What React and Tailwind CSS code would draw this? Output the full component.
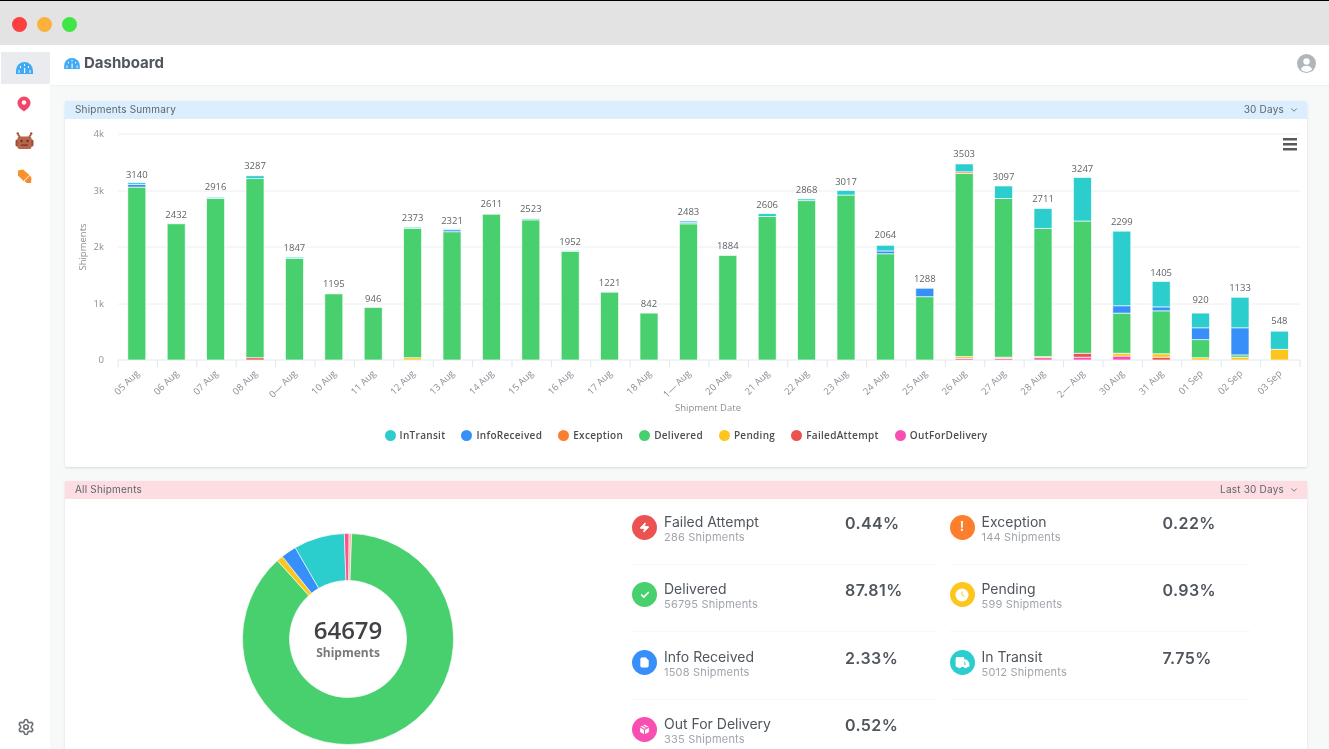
import { ChevronDown, Settings, Zap, Check, File, Package, Truck } from 'lucide-react'

const COLORS = {
    ofd: '#f94fb0',
    failed: '#ec5252',
    pending: '#fdc61f',
    delivered: '#48d06e',
    exception: '#fb7f2c',
    info: '#3790f9',
    transit: '#2ccdcd',
}

// segments go bottom to top, same order as the stack in the chart
const DAYS = [
    ['05 Aug', 3140, [['delivered', 3060], ['info', 50], ['transit', 30]]],
    ['06 Aug', 2432, [['delivered', 2410]]],
    ['07 Aug', 2916, [['delivered', 2860], ['transit', 20]]],
    ['08 Aug', 3287, [['failed', 40], ['delivered', 3170], ['transit', 50]]],
    ['0— Aug', 1847, [['delivered', 1800], ['transit', 20]]],
    ['10 Aug', 1195, [['delivered', 1170]]],
    ['11 Aug', 946, [['delivered', 930]]],
    ['12 Aug', 2373, [['pending', 40], ['delivered', 2290], ['transit', 20]]],
    ['13 Aug', 2321, [['delivered', 2270], ['info', 35], ['transit', 16]]],
    ['14 Aug', 2611, [['delivered', 2580]]],
    ['15 Aug', 2523, [['delivered', 2480], ['transit', 20]]],
    ['16 Aug', 1952, [['delivered', 1920], ['transit', 15]]],
    ['17 Aug', 1221, [['delivered', 1200]]],
    ['18 Aug', 842, [['delivered', 830]]],
    ['1— Aug', 2483, [['delivered', 2410], ['info', 20], ['transit', 30]]],
    ['20 Aug', 1884, [['delivered', 1850]]],
    ['21 Aug', 2606, [['delivered', 2540], ['transit', 50]]],
    ['22 Aug', 2868, [['delivered', 2820], ['transit', 30]]],
    ['23 Aug', 3017, [['delivered', 2920], ['transit', 80]]],
    ['24 Aug', 2064, [['delivered', 1880], ['info', 50], ['transit', 100]]],
    ['25 Aug', 1288, [['delivered', 1120], ['info', 150]]],
    ['26 Aug', 3503, [['ofd', 30], ['pending', 30], ['delivered', 3240], ['exception', 30], ['transit', 140]]],
    ['27 Aug', 3097, [['ofd', 30], ['pending', 20], ['delivered', 2810], ['transit', 220]]],
    ['28 Aug', 2711, [['ofd', 40], ['pending', 20], ['delivered', 2270], ['transit', 350]]],
    ['2— Aug', 3247, [['ofd', 50], ['failed', 70], ['delivered', 2340], ['transit', 770]]],
    ['30 Aug', 2299, [['ofd', 70], ['pending', 50], ['delivered', 710], ['info', 130], ['transit', 1320]]],
    ['31 Aug', 1405, [['failed', 50], ['pending', 60], ['delivered', 760], ['info', 70], ['transit', 450]]],
    ['01 Sep', 920, [['pending', 40], ['delivered', 320], ['info', 210], ['transit', 260]]],
    ['02 Sep', 1133, [['pending', 50], ['delivered', 40], ['info', 480], ['transit', 540]]],
    ['03 Sep', 548, [['pending', 190], ['transit', 320]]],
]

const LEGEND = [
    ['InTransit', 'transit'],
    ['InfoReceived', 'info'],
    ['Exception', 'exception'],
    ['Delivered', 'delivered'],
    ['Pending', 'pending'],
    ['FailedAttempt', 'failed'],
    ['OutForDelivery', 'ofd'],
]

const STATS = [
    ['Failed Attempt', '286 Shipments', '0.44%', 'bg-[#ec5252]', <Zap size={11} fill="white" stroke="white" />],
    ['Exception', '144 Shipments', '0.22%', 'bg-[#fb7f2c]', <span className="text-[13px] font-bold text-white/90">!</span>],
    ['Delivered', '56795 Shipments', '87.81%', 'bg-[#48d06e]', <Check size={10} stroke="white" strokeWidth={4} />],
    ['Pending', '599 Shipments', '0.93%', 'bg-[#fdc61f]', <PendingGlyph />],
    ['Info Received', '1508 Shipments', '2.33%', 'bg-[#3790f9]', <File size={11} fill="white" stroke="white" />],
    ['In Transit', '5012 Shipments', '7.75%', 'bg-[#2ccdcd]', <Truck size={15} fill="white" stroke="white" />],
    ['Out For Delivery', '335 Shipments', '0.52%', 'bg-[#f94fb0]', <Package size={13} fill="white" stroke="#f94fb0" />],
]

const SLICES = [
    [0.5, 2, '#f8b8a0'],
    [2, 318, COLORS.delivered],
    [318, 321.5, COLORS.pending],
    [321.5, 330, COLORS.info],
    [330, 358, COLORS.transit],
    [358, 360.5, '#f9558f'],
]

function PendingGlyph() {
    return (
        <svg width="14" height="14" viewBox="0 0 14 14">
            <circle cx="7" cy="7" r="6.5" fill="white" />
            <path d="M7 3.5V7l2.5 1.5" fill="none" stroke="#fdc61f" strokeWidth="1" />
        </svg>
    )
}

function DomeIcon({ className }) {
    return (
        <svg className={className} viewBox="0 0 17 12">
            <path d="M0 12V8.5a8.5 8.5 0 0 1 17 0V12Z" fill="#3fa9f5" />
            <g fill="white">
                <rect x="8" y="2" width="1" height="2" />
                <rect x="8" y="6" width="1.2" height="5" />
                <rect x="4" y="4" width="1" height="2" />
                <rect x="12" y="4" width="1" height="2" />
                <rect x="2.5" y="8" width="1" height="3" />
                <rect x="13.5" y="8" width="1" height="3" />
            </g>
        </svg>
    )
}

function PinIcon() {
    return (
        <svg width="14" height="16" viewBox="0 0 14 16">
            <path d="M7 0.5a6.5 6.5 0 0 1 6.5 6.5C13.5 11 9 14 7 15.5 5 14 0.5 11 0.5 7A6.5 6.5 0 0 1 7 0.5Z" fill="#f2456a" />
            <circle cx="7" cy="6.5" r="2.2" fill="white" />
        </svg>
    )
}

function RobotIcon() {
    return (
        <svg width="19" height="19" viewBox="0 0 19 19">
            <path d="M3 3.5 5 6M16 3.5 14 6" stroke="#a4503a" strokeWidth="1.8" />
            <circle cx="2.8" cy="2.5" r="1.2" fill="#a4503a" />
            <circle cx="16.2" cy="2.5" r="1.2" fill="#a4503a" />
            <rect x="0.5" y="8.5" width="18" height="7" rx="1.5" fill="#9c4c37" />
            <rect x="2.5" y="5.5" width="14" height="12.5" rx="2" fill="#b8654b" />
            <circle cx="6.5" cy="10" r="1.2" fill="#6b3424" />
            <circle cx="12.5" cy="10" r="1.2" fill="#6b3424" />
            <rect x="6" y="13.5" width="7" height="1.2" fill="#6b3424" />
        </svg>
    )
}

function TagIcon() {
    return (
        <svg width="15" height="15" viewBox="0 0 15 15">
            <path d="M1 1.5 6 0.5 12.5 6 6.5 12 1 6.5Z" fill="#f9912f" />
            <path d="M9 10.5 13 6.5 14.5 9 14 14 9.5 14 7.5 12Z" fill="#fb8a2c" />
        </svg>
    )
}

function ProfileIcon() {
    return (
        <svg width="19" height="19" viewBox="0 0 19 19">
            <circle cx="9.5" cy="9.5" r="9.5" fill="#b1b6bc" />
            <circle cx="9.5" cy="7.5" r="3.2" fill="white" />
            <path d="M3.8 15.5c1-2.8 3-3.8 5.7-3.8s4.7 1 5.7 3.8a8 8 0 0 1-11.4 0Z" fill="white" />
        </svg>
    )
}

function polar(r, deg) {
    const a = (deg * Math.PI) / 180
    return [106 + r * Math.sin(a), 106 - r * Math.cos(a)]
}

function slicePath(from, to) {
    const [x1, y1] = polar(105.5, from)
    const [x2, y2] = polar(105.5, to)
    const [x3, y3] = polar(58.5, to)
    const [x4, y4] = polar(58.5, from)
    const large = to - from > 180 ? 1 : 0
    return `M${x1} ${y1}A105.5 105.5 0 ${large} 1 ${x2} ${y2}L${x3} ${y3}A58.5 58.5 0 ${large} 0 ${x4} ${y4}Z`
}

function BarChart() {
    const scale = 0.0565
    const baseline = 360

    return (
        <svg className="block w-[1242px] h-[298px] [font-family:'Open_Sans',sans-serif]" viewBox="65 119 1242 298">
            {[['4k', 134], ['3k', 191], ['2k', 247], ['1k', 304]].map(([label, y]) => (
                <g key={label}>
                    <line x1="118" x2="1300" y1={y} y2={y} stroke="#eceef0" />
                    <text x="104" y={y + 3} textAnchor="end" fontSize="9.5" fill="#8b9097">{label}</text>
                </g>
            ))}
            <text x="104" y="363" textAnchor="end" fontSize="9.5" fill="#8b9097">0</text>
            <line x1="118" x2="1300" y1={baseline} y2={baseline} stroke="#e0e6f1" />
            {DAYS.map((_, i) => (
                <line key={i} x1={118 + i * 39.4} x2={118 + i * 39.4} y1={baseline} y2={baseline + 7} stroke="#dfe6f1" />
            ))}
            <line x1="1300" x2="1300" y1={baseline} y2={baseline + 7} stroke="#dfe6f1" />

            {DAYS.map(([date, total, segments], i) => {
                const cx = 136.8 + i * 39.4
                let y = baseline
                return (
                    <g key={date}>
                        {segments.map(([name, value]) => {
                            const h = value * scale
                            y -= h
                            return <rect key={name} x={cx - 9} y={y} width="18" height={h} fill={COLORS[name]} stroke="white" strokeOpacity="0.8" strokeWidth="0.8" />
                        })}
                        <text x={cx} y={baseline - total * scale - 5} textAnchor="middle" fontSize="9.5" fill="#5f6368">{total}</text>
                        <text x={cx + 3} y="374" textAnchor="end" fontSize="9.5" fill="#8b9097" transform={`rotate(-45 ${cx + 3} 374)`}>{date}</text>
                    </g>
                )
            })}

            <text x="708" y="411" textAnchor="middle" fontSize="9.5" fill="#8b9097">Shipment Date</text>
            <text x="86" y="247" textAnchor="middle" fontSize="9.5" fill="#8b9097" transform="rotate(-90 86 247)">Shipments</text>

            <rect x="1283" y="138" width="14" height="2.5" fill="#5a5a5a" />
            <rect x="1283" y="143" width="14" height="2.5" fill="#5a5a5a" />
            <rect x="1283" y="148" width="14" height="2.5" fill="#5a5a5a" />
        </svg>
    )
}

function Donut() {
    return (
        <svg className="block w-[212px] h-[212px] [font-family:'Open_Sans',sans-serif]" viewBox="0 0 212 212">
            {SLICES.map(([from, to, color]) => (
                <path key={color} d={slicePath(from, to)} fill={color} stroke="white" strokeWidth="0.6" />
            ))}
            <text x="106" y="106" textAnchor="middle" fontSize="24" fontWeight="600" fill="#3f4145">64679</text>
            <text x="106" y="124" textAnchor="middle" fontSize="12" fontWeight="700" fill="#77797d">Shipments</text>
        </svg>
    )
}

function CardHeader({ title, range, className }) {
    return (
        <div className={`flex items-center justify-between h-[18px] pb-[1px] pl-[10px] pr-[8px] text-[10px] tracking-[0.2px] text-[#5c6670] ${className}`}>
            <span>{title}</span>
            <span className="flex items-center gap-[5px]">
                {range}
                <ChevronDown size={10} />
            </span>
        </div>
    )
}

export default function App() {
    return (
        <div className="flex flex-col h-screen overflow-hidden bg-[#f7f9f9] blur-[0.6px] [font-family:Inter,sans-serif]">
            <div className="flex items-center gap-[10px] h-[45px] shrink-0 pl-[12px] pt-[3px] bg-[#e3e3e3] border-t border-black">
                <span className="w-[15px] h-[15px] rounded-full bg-[#fd3f3f]" />
                <span className="w-[15px] h-[15px] rounded-full bg-[#fdb13d]" />
                <span className="w-[15px] h-[15px] rounded-full bg-[#3fe645]" />
            </div>

            <div className="flex flex-1 min-h-0">
                <aside className="flex flex-col w-[50px] shrink-0 pt-[7px] pl-[1px] bg-white">
                    <div className="flex items-center justify-center h-8 mb-1 pr-[3px] bg-[#e9ebee]">
                        <DomeIcon className="w-[17px] h-[12px]" />
                    </div>
                    <div className="flex items-center justify-center h-8 mb-1 pr-[3px]"><PinIcon /></div>
                    <div className="flex items-center justify-center h-8 mb-1 pr-[3px]"><RobotIcon /></div>
                    <div className="flex items-center justify-center h-8 mb-1 pr-[3px]"><TagIcon /></div>
                    <div className="flex justify-center mt-auto pb-[13px] text-[#6b7076]">
                        <Settings size={18} strokeWidth={2.2} />
                    </div>
                </aside>

                <div className="flex flex-col flex-1 min-w-0">
                    <header className="flex items-center justify-between h-[41px] shrink-0 pl-[14px] pr-[13px] pb-[3px] bg-white border-b border-[#eef0f1]">
                        <div className="flex items-center gap-[4px]">
                            <DomeIcon className="w-[16px] h-[11px]" />
                            <h1 className="text-[15px] font-bold text-[#50565e]">Dashboard</h1>
                        </div>
                        <ProfileIcon />
                    </header>

                    <main className="flex flex-col gap-[14px] pl-[15px] pr-[22px] pt-[15px]">
                        <section className="h-[366px] shrink-0 bg-white rounded-[2px] shadow-sm">
                            <CardHeader title="Shipments Summary" range="30 Days" className="bg-[#dbeefd]" />
                            <BarChart />
                            <div className="flex justify-center items-center gap-[16px] h-[38px] pb-[2px] text-[10px] font-semibold tracking-[0.3px] text-[#4a4d52] [font-family:'Open_Sans',sans-serif]">
                                {LEGEND.map(([label, key]) => (
                                    <span key={key} className="flex items-center gap-[4px]">
                                        <svg width="11" height="11" viewBox="0 0 11 11"><circle cx="5.5" cy="5.5" r="5.5" fill={COLORS[key]} /></svg>
                                        {label}
                                    </span>
                                ))}
                            </div>
                        </section>

                        <section className="h-[300px] shrink-0 bg-white rounded-[2px] shadow-sm">
                            <CardHeader title="All Shipments" range="Last 30 Days" className="bg-[#fddde1]" />
                            <div className="flex items-start">
                                <div className="flex justify-center w-[566px] shrink-0 pt-[34px]">
                                    <Donut />
                                </div>
                                <div className="grid grid-cols-[304px_300px] gap-x-[13.5px] pt-[15.5px] ml-[1px]">
                                    {STATS.map(([label, sub, pct, bg, icon]) => (
                                        <div key={label} className="flex items-start gap-[7px] h-[50px] mb-[17.5px] border-b border-[#f8f8f8]">
                                            <span className={`flex items-center justify-center w-[25px] h-[25px] shrink-0 rounded-full ${bg}`}>{icon}</span>
                                            <div className="w-[174px] shrink-0 -mt-[2px]">
                                                <div className="text-[14px] leading-[17px] text-[#50565e]">{label}</div>
                                                <div className="text-[11px] leading-[14px] tracking-[0.2px] text-[#a0a5ac]">{sub}</div>
                                            </div>
                                            <span className="-mt-[2px] text-[16px] leading-[20px] font-semibold tracking-[0.4px] text-[#50565e]">{pct}</span>
                                        </div>
                                    ))}
                                </div>
                            </div>
                        </section>
                    </main>
                </div>
            </div>
        </div>
    )
}
